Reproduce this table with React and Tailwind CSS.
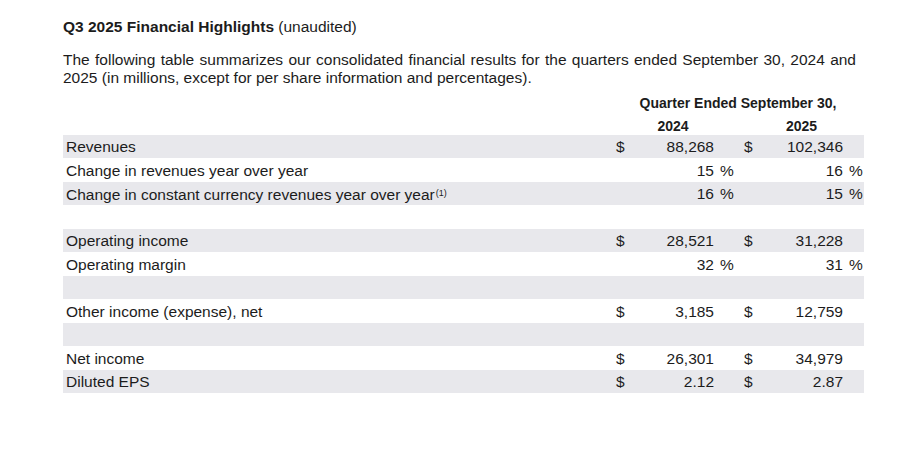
import React from "react";

const rows = [
  { label: "Revenues", d1: "$", v1: "88,268", d2: "$", v2: "102,346", grey: true },
  { label: "Change in revenues year over year", v1: "15", p1: true, v2: "16", p2: true },
  { label: "Change in constant currency revenues year over year", sup: "(1)", v1: "16", p1: true, v2: "15", p2: true, grey: true },
  { label: "" },
  { label: "Operating income", d1: "$", v1: "28,521", d2: "$", v2: "31,228", grey: true },
  { label: "Operating margin", v1: "32", p1: true, v2: "31", p2: true },
  { label: "", grey: true },
  { label: "Other income (expense), net", d1: "$", v1: "3,185", d2: "$", v2: "12,759" },
  { label: "", grey: true },
  { label: "Net income", d1: "$", v1: "26,301", d2: "$", v2: "34,979" },
  { label: "Diluted EPS", d1: "$", v1: "2.12", d2: "$", v2: "2.87", grey: true },
];

function Row({ r }) {
  return (
    <div
      className={
        "flex items-center text-[15.5px] " +
        (r.grey ? "h-[23px] leading-[24px] bg-[#e8e8ec]" : "h-[24px] leading-[25px] bg-white")
      }
    >
      <div className="w-[549px] pl-[3px] whitespace-nowrap">
        {r.label}
        {r.sup && <span className="text-[9px] align-[4px] ml-[1px]">{r.sup}</span>}
      </div>
      <div className="w-[20px] pl-[4px]">{r.d1 || ""}</div>
      <div className="w-[82px] text-right">{r.v1 || ""}</div>
      <div className="w-[26px] pl-[6px]">{r.p1 ? "%" : ""}</div>
      <div className="w-[20px] pl-[4px]">{r.d2 || ""}</div>
      <div className="w-[83px] text-right">{r.v2 || ""}</div>
      <div className="w-[21px] pl-[6px]">{r.p2 ? "%" : ""}</div>
    </div>
  );
}

export default function App() {
  return (
    <div
      className="w-[920px] h-[469px] bg-white text-[#1c1c1c] pl-[63px] pt-[18px]"
      style={{ fontFamily: '"Liberation Sans", Arial, sans-serif' }}
    >
      <div className="text-[15.5px] leading-[18px] whitespace-nowrap">
        <span className="font-bold">Q3 2025 Financial Highlights</span> (unaudited)
      </div>
      <p className="mt-[15px] w-[793px] text-[15.5px] leading-[18px] text-justify">
        The following table summarizes our consolidated financial results for the quarters ended September 30, 2024 and
        2025 (in millions, except for per share information and percentages).
      </p>
      <div className="w-[801px] mt-[7px]">
        <div className="flex h-[18px] leading-[18px] text-[14px] font-bold">
          <div className="w-[549px]" />
          <div className="w-[252px] text-center">Quarter Ended September 30,</div>
        </div>
        <div className="flex h-[17px] leading-[17px] text-[14px] font-bold mt-[6px]">
          <div className="w-[569px]" />
          <div className="w-[82px] text-center">2024</div>
          <div className="w-[46px]" />
          <div className="w-[83px] text-center">2025</div>
        </div>
        {rows.map((r, i) => (
          <Row key={i} r={r} />
        ))}
      </div>
    </div>
  );
}
